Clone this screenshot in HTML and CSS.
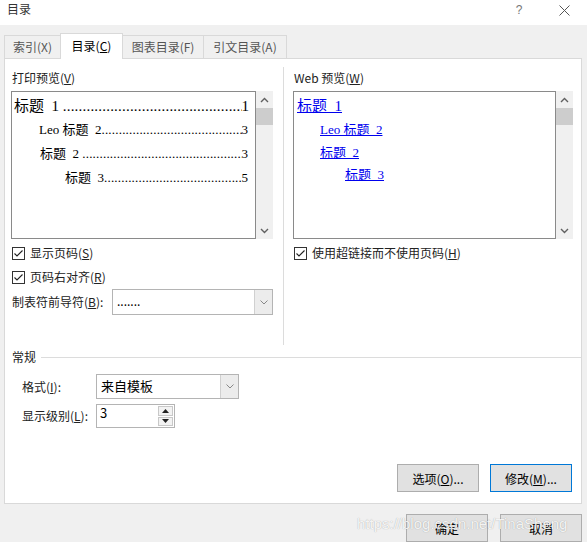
FILE: index.html
```html
<!DOCTYPE html>
<html lang="zh-CN">
<head>
<meta charset="utf-8">
<title>目录</title>
<link rel="stylesheet" href="styles.css">
</head>
<body>
<div class="titlebar">
  <div class="title">目录</div>
  <div class="help">?</div>
  <div class="close"><svg width="11" height="11" viewBox="0 0 11 11"><path d="M0.5 0.5 L10.5 10.5 M10.5 0.5 L0.5 10.5" stroke="#555" stroke-width="1" fill="none"/></svg></div>
</div>

<div class="tabs">
  <div class="tab t1">索引(X)</div>
  <div class="tab t2 active">目录(<u>C</u>)</div>
  <div class="tab t3">图表目录(F)</div>
  <div class="tab t4">引文目录(A)</div>
</div>

<div class="panel">
  <div class="columns">
    <div class="col col-left">
      <div class="label">打印预览(<u>V</u>)</div>
      <div class="preview">
        <div class="preview-box print">
          <div class="toc r1"><span>标题&nbsp;&nbsp;1&nbsp;</span><span class="dots"></span><span>1</span></div>
          <div class="toc r2"><span>Leo 标题&nbsp;&nbsp;2</span><span class="dots"></span><span>3</span></div>
          <div class="toc r3"><span>标题&nbsp;&nbsp;2&nbsp;</span><span class="dots"></span><span>3</span></div>
          <div class="toc r4"><span>标题&nbsp;&nbsp;3</span><span class="dots"></span><span>5</span></div>
        </div>
        <div class="scroll">
          <div class="sbtn"><svg width="9" height="6" viewBox="0 0 9 6"><path d="M1 5 L4.5 1.5 L8 5" stroke="#606060" stroke-width="1.4" fill="none"/></svg></div>
          <div class="thumb"></div>
          <div class="track"></div>
          <div class="sbtn"><svg width="9" height="6" viewBox="0 0 9 6"><path d="M1 1 L4.5 4.5 L8 1" stroke="#606060" stroke-width="1.4" fill="none"/></svg></div>
        </div>
      </div>
      <div class="check first"><span class="box"><svg width="11" height="11" viewBox="0 0 11 11"><path d="M1.5 5.5 L4 8 L9.5 2.5" stroke="#222" stroke-width="1.1" fill="none"/></svg></span>显示页码(<u>S</u>)</div>
      <div class="check"><span class="box"><svg width="11" height="11" viewBox="0 0 11 11"><path d="M1.5 5.5 L4 8 L9.5 2.5" stroke="#222" stroke-width="1.1" fill="none"/></svg></span>页码右对齐(<u>R</u>)</div>
      <div class="leader-row">
        <span class="leader-label">制表符前导符(<u>B</u>):</span>
        <div class="select leader-select">
          <span class="sel-text">.......</span>
          <span class="sel-arrow"><svg width="8" height="5" viewBox="0 0 8 5"><path d="M0.5 0.5 L4 4 L7.5 0.5" stroke="#888" stroke-width="1" fill="none"/></svg></span>
        </div>
      </div>
    </div>

    <div class="col col-right">
      <div class="label">Web 预览(<u>W</u>)</div>
      <div class="preview">
        <div class="preview-box web">
          <div class="link l1"><a>标题&nbsp;&nbsp;1</a></div>
          <div class="link l2"><a>Leo 标题&nbsp;&nbsp;2</a></div>
          <div class="link l3"><a>标题&nbsp;&nbsp;2</a></div>
          <div class="link l4"><a>标题&nbsp;&nbsp;3</a></div>
        </div>
        <div class="scroll">
          <div class="sbtn"><svg width="9" height="6" viewBox="0 0 9 6"><path d="M1 5 L4.5 1.5 L8 5" stroke="#606060" stroke-width="1.4" fill="none"/></svg></div>
          <div class="thumb"></div>
          <div class="track"></div>
          <div class="sbtn"><svg width="9" height="6" viewBox="0 0 9 6"><path d="M1 1 L4.5 4.5 L8 1" stroke="#606060" stroke-width="1.4" fill="none"/></svg></div>
        </div>
      </div>
      <div class="check first"><span class="box"><svg width="11" height="11" viewBox="0 0 11 11"><path d="M1.5 5.5 L4 8 L9.5 2.5" stroke="#222" stroke-width="1.1" fill="none"/></svg></span>使用超链接而不使用页码(<u>H</u>)</div>
    </div>
  </div>

  <div class="group-head"><span>常规</span><span class="group-line"></span></div>
  <div class="form-row format-row">
    <span class="form-label">格式(<u>I</u>):</span>
    <div class="select format-select">
      <span class="sel-text">来自模板</span>
      <span class="sel-arrow"><svg width="8" height="5" viewBox="0 0 8 5"><path d="M0.5 0.5 L4 4 L7.5 0.5" stroke="#888" stroke-width="1" fill="none"/></svg></span>
    </div>
  </div>
  <div class="form-row level-row">
    <span class="form-label">显示级别(<u>L</u>):</span>
    <div class="spinner">
      <span class="spin-text">3</span>
      <span class="spin-btns">
        <span class="spin-btn"><svg width="7" height="4" viewBox="0 0 7 4"><path d="M0 4 L3.5 0 L7 4 Z" fill="#222"/></svg></span>
        <span class="spin-btn"><svg width="7" height="4" viewBox="0 0 7 4"><path d="M0 0 L3.5 4 L7 0 Z" fill="#222"/></svg></span>
      </span>
    </div>
  </div>
  <div class="panel-buttons">
    <button class="btn">选项(<u>O</u>)...</button>
    <button class="btn default">修改(<u>M</u>)...</button>
  </div>
</div>

<div class="footer">
  <button class="btn">确定</button>
  <button class="btn">取消</button>
</div>
<div class="watermark">https://blog.csdn.net/TinaSheng</div>
</body>
</html>
```

FILE: styles.css
```css
* { box-sizing: border-box; }

body {
  margin: 0;
  width: 587px;
  height: 542px;
  overflow: hidden;
  position: relative;
  background: #f0f0f0;
  font-family: "Noto Sans CJK SC", "Noto Sans", sans-serif;
  font-size: 12px;
  line-height: 18px;
  color: #000;
}

u { text-decoration: underline; text-underline-offset: 1px; }

/* title bar */
.titlebar {
  height: 25px;
  background: #fff;
  display: flex;
  align-items: flex-start;
  padding: 0 0 0 7px;
}
.title { flex: 1; color: #333; font-size: 12px; line-height: 18px; }
.help {
  width: 14px;
  text-align: center;
  color: #777;
  font-family: "Liberation Sans", sans-serif;
  font-size: 12px;
  line-height: 20px;
  margin-right: 33px;
}
.close { width: 12px; margin-right: 16px; padding-top: 5px; line-height: 0; }

/* tabs */
.tabs {
  height: 33px;
  display: flex;
  align-items: flex-end;
  padding-left: 4px;
  position: relative;
  z-index: 1;
}
.tab {
  height: 23px;
  border: 1px solid #d9d9d9;
  border-bottom: none;
  background: #f0f0f0;
  color: #555;
  text-align: center;
  line-height: 22px;
  margin-right: -1px;
}
.tab.active {
  height: 26px;
  background: #fff;
  color: #000;
  margin-bottom: -1px;
  line-height: 24px;
  position: relative;
  z-index: 2;
}
.t1 { width: 57px; }
.t2 { width: 63px; }
.t3 { width: 82px; }
.t4 { width: 84px; }

/* panel */
.panel {
  margin: 0 5px 0 4px;
  height: 446px;
  background: #fff;
  border: 1px solid #d9d9d9;
  display: flex;
  flex-direction: column;
  padding-bottom: 11px;
}

.columns {
  display: flex;
  margin-top: 8px;
  height: 278px;
}
.col-left {
  width: 279px;
  padding-left: 6px;
  border-right: 1px solid #dcdcdc;
}
.col-right {
  flex: 1;
  padding-left: 9px;
}

.label {
  margin-top: 2px;
  margin-bottom: 4px;
  padding-left: 1px;
  line-height: 18px;
  color: #222;
}

.preview { display: flex; height: 148px; }
.preview-box {
  border: 1px solid #8a8a8a;
  background: #fff;
  padding-top: 2px;
  overflow: hidden;
}
.preview-box.print { width: 245px; }
.preview-box.web { width: 263px; }

.scroll {
  width: 17px;
  background: #f0f0f0;
  display: flex;
  flex-direction: column;
}
.sbtn {
  height: 17px;
  display: flex;
  align-items: center;
  justify-content: center;
}
.thumb { height: 17px; background: #cdcdcd; }
.track { flex: 1; }

/* toc print preview */
.toc {
  display: flex;
  white-space: nowrap;
  font-family: "Liberation Serif", "Noto Sans CJK SC", serif;
  font-size: 13px;
  height: 24px;
  line-height: 24px;
}
.toc .dots { flex: 1; overflow: hidden; letter-spacing: 0.2px; }
.toc .dots::after {
  content: "..............................................................................";
}
.r1 { font-size: 15px; padding-left: 2px; padding-right: 6px; }
.r2 { padding-left: 27px; padding-right: 7px; }
.r3 { padding-left: 28px; padding-right: 7px; }
.r4 { padding-left: 53px; padding-right: 7px; }

/* web preview */
.link {
  font-family: "Liberation Serif", "Noto Sans CJK SC", serif;
  font-size: 13px;
  white-space: nowrap;
}
.link a { color: #0000ee; text-decoration: underline; text-underline-offset: 1px; }
.l1 { height: 24px; line-height: 24px; padding-left: 3px; font-size: 15px; }
.l2 { height: 24px; line-height: 24px; padding-left: 26px; }
.l3 { height: 22px; line-height: 22px; padding-left: 26px; }
.l4 { height: 22px; line-height: 22px; padding-left: 51px; }

/* checkboxes */
.check {
  height: 24px;
  display: flex;
  align-items: center;
  padding-left: 1px;
  color: #222;
}
.check.first { margin-top: 2px; }
.box {
  width: 13px;
  height: 13px;
  border: 1px solid #333;
  background: #fff;
  margin-right: 5px;
  display: flex;
  align-items: center;
  justify-content: center;
}

/* leader */
.leader-row {
  height: 26px;
  display: flex;
  align-items: center;
  padding-left: 1px;
}
.leader-label { width: 100px; color: #222; }
.select {
  height: 26px;
  border: 1px solid #b4b4b4;
  background: #fff;
  display: flex;
  align-items: stretch;
}
.leader-select { width: 161px; }
.sel-text { flex: 1; padding-left: 4px; line-height: 22px; }
.sel-arrow {
  width: 18px;
  border-left: 1px solid #d0d0d0;
  background: #ececec;
  display: flex;
  align-items: center;
  justify-content: center;
}

/* group */
.group-head {
  margin-top: 4px;
  height: 16px;
  display: flex;
  align-items: center;
  padding-left: 7px;
  color: #222;
}
.group-line { flex: 1; height: 1px; background: #dcdcdc; margin-left: 5px; margin-top: 1px; }

.form-row {
  display: flex;
  align-items: center;
  padding-left: 17px;
}
.form-label { width: 74px; color: #222; }
.format-row { margin-top: 9px; height: 25px; }
.format-select { width: 143px; height: 25px; }
.format-select .sel-text { font-size: 13px; line-height: 22px; }
.level-row { margin-top: 5px; height: 24px; }

.spinner {
  width: 79px;
  height: 24px;
  border: 1px solid #b4b4b4;
  background: #fff;
  display: flex;
}
.spin-text { flex: 1; padding-left: 3px; font-size: 13px; line-height: 16px; }
.spin-btns {
  width: 17px;
  display: flex;
  flex-direction: column;
  padding: 1px;
  gap: 1px;
}
.spin-btn {
  flex: 1;
  border: 1px solid #c8c8c8;
  background: #f2f2f2;
  display: flex;
  align-items: center;
  justify-content: center;
}

/* buttons */
.panel-buttons {
  margin-top: auto;
  display: flex;
  justify-content: flex-end;
  gap: 11px;
  padding-right: 9px;
}
.btn {
  width: 82px;
  height: 28px;
  border: 1px solid #adadad;
  background: #e1e1e1;
  font-family: "Noto Sans CJK SC", "Noto Sans", sans-serif;
  font-size: 12px;
  color: #000;
  padding: 0;
}
.btn.default { border-color: #0078d7; }

.footer {
  margin-top: 10px;
  display: flex;
  justify-content: flex-end;
  gap: 12px;
  padding-right: 5px;
}

.watermark {
  position: absolute;
  left: 357px;
  top: 514px;
  font-family: "Liberation Sans", sans-serif;
  font-size: 15px;
  line-height: 20px;
  color: rgba(255, 255, 255, 0.9);
  text-shadow: 0 0 1px rgba(0, 0, 0, 0.35);
  white-space: nowrap;
  z-index: 5;
}
```
